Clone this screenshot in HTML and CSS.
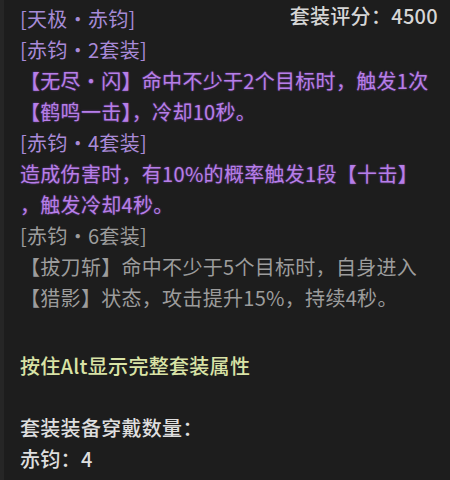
FILE: index.html
```html
<!DOCTYPE html>
<html lang="zh">
<head>
<meta charset="utf-8">
<link rel="stylesheet" href="styles.css">
</head>
<body>
<div class="tip">
  <div class="head">
    <div class="line title">[天极・赤钧]</div>
    <div class="score">套装评分：4500</div>
  </div>
  <div class="line sub">[赤钧・2套装]</div>
  <div class="line act">【无尽・闪】命中不少于2个目标时，触发1次</div>
  <div class="line act">【鹤鸣一击】，冷却10秒。</div>
  <div class="line sub">[赤钧・4套装]</div>
  <div class="line act">造成伤害时，有10%的概率触发1段【十击】</div>
  <div class="line act">，触发冷却4秒。</div>
  <div class="line off">[赤钧・6套装]</div>
  <div class="line off">【拔刀斩】命中不少于5个目标时，自身进入</div>
  <div class="line off">【猎影】状态，攻击提升15%，持续4秒。</div>
  <div class="line hint">按住Alt显示完整套装属性</div>
  <div class="line white count">套装装备穿戴数量：</div>
  <div class="line white">赤钧：4</div>
</div>
</body>
</html>
```
FILE: styles.css
```css
html, body {
  margin: 0;
  padding: 0;
  background: #1c1c1c;
}
body {
  width: 450px;
  height: 480px;
  overflow: hidden;
}
.tip {
  box-sizing: border-box;
  width: 450px;
  height: 480px;
  padding: 3px 12px 0 16px;
  background: #1d1d1d;
  border-left: 4px solid #262626;
  font-family: "Noto Sans CJK SC", "Noto Sans", sans-serif;
  font-size: 20px;
  font-weight: 400;
  letter-spacing: 0.3px;
}
.line {
  line-height: 31px;
  height: 31px;
  white-space: nowrap;
}
.head {
  display: flex;
  justify-content: space-between;
  align-items: flex-start;
}
.title {
  color: #a58bd6;
}
.score {
  line-height: 31px;
  color: #d6d6d6;
  font-weight: 500;
  margin-top: -3px;
}
.sub {
  color: #a98ad8;
}
.act {
  color: #b67ee8;
  text-shadow: 0 0 2px rgba(170, 90, 230, 0.6);
}
.off {
  color: #9c9c9c;
}
.hint {
  margin-top: 37px;
  color: #d9e3a6;
  font-weight: 500;
}
.white {
  color: #dedede;
  font-weight: 500;
}
.count {
  margin-top: 31px;
}
```
